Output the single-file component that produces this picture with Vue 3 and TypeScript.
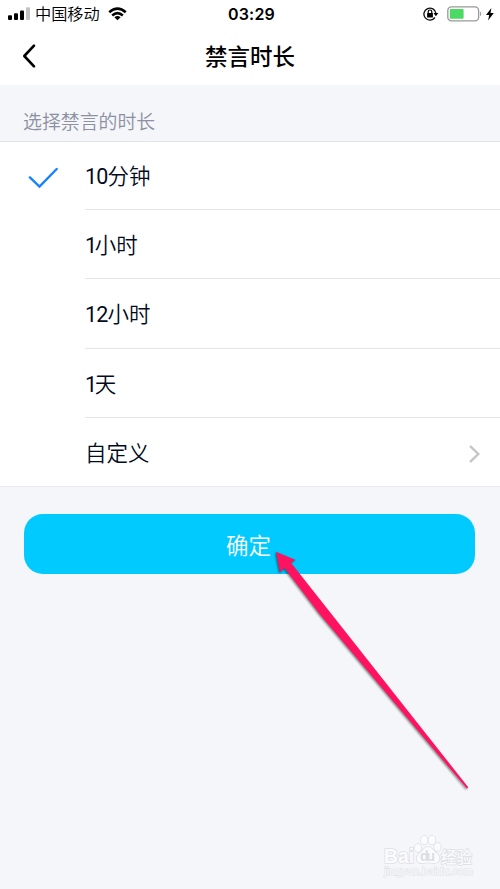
<script setup lang="ts">
import { ref } from 'vue'

interface DurationOption {
  amount?: string
  unit: string
  more?: boolean
}

const options: DurationOption[] = [
  { amount: '10', unit: '分钟' },
  { amount: '1', unit: '小时' },
  { amount: '12', unit: '小时' },
  { amount: '1', unit: '天' },
  { unit: '自定义', more: true },
]
const selected = ref(0)
</script>

<template>
  <div class="screen">
    <header class="top">
      <div class="status">
        <div class="status-left">
          <svg class="signal" width="22" height="14" viewBox="0 0 22 14">
            <rect x="0" y="8.2" width="4" height="4.8" rx="1" />
            <rect x="6" y="6.2" width="4" height="6.8" rx="1" />
            <rect x="12" y="3.4" width="4" height="9.6" rx="1" />
            <rect x="18" y="0.2" width="4" height="12.8" rx="1" fill="#c3c3c3" />
          </svg>
          <span class="carrier">中国移动</span>
          <svg class="wifi" width="19" height="14" viewBox="0 0 20 14">
            <g fill="none" stroke="#000" stroke-width="2.7">
              <path d="M1.3 5.2Q10 -2.5 18.7 5.2" />
              <path d="M4.4 8.6Q10 3.6 15.6 8.6" />
            </g>
            <path d="M6.7 10.5Q10 7.9 13.3 10.5L10 13.7Z" />
          </svg>
        </div>
        <span class="clock">03:29</span>
        <div class="status-right">
          <svg width="16" height="14" viewBox="0 0 16 14">
            <path d="M11.9 10.5A6 6 0 1 1 12.9 6.4" fill="none" stroke="#111" stroke-width="1.35" />
            <path d="M10.5 6.1H15.3L12.9 9.2Z" />
            <rect x="4.1" y="6.1" width="5.8" height="4.4" rx=".5" />
            <path d="M5.2 6.4V4.8a1.8 1.8 0 0 1 3.6 0V6.4" fill="none" stroke="#000" stroke-width="1.2" />
          </svg>
          <svg class="battery" width="36" height="16" viewBox="0 0 36 16">
            <rect x=".8" y=".8" width="30.8" height="14" rx="3.6" fill="#fff" stroke="#999" stroke-width="1.3" />
            <rect x="2.8" y="2.9" width="13.8" height="9.8" rx="1" fill="#4cd964" />
            <path d="M33.2 5.2Q35.2 7.8 33.2 10.4Z" fill="#888" />
          </svg>
          <svg class="bolt" width="8" height="13" viewBox="0 0 8 13">
            <path d="M5.4 0L0 7.1H3.2L2.1 12.6L7.8 5.1H4.5Z" />
          </svg>
        </div>
      </div>
      <div class="nav">
        <svg class="back" width="14" height="26" viewBox="0 0 14 26">
          <path d="M12 2.6L2.3 13L12 23.4" fill="none" stroke="#000" stroke-width="2.6" stroke-linecap="round" stroke-linejoin="round" />
        </svg>
        <h1>禁言时长</h1>
      </div>
    </header>

    <h2 class="section">选择禁言的时长</h2>

    <ul class="list">
      <li v-for="(option, i) in options" :key="i" @click="selected = i">
        <div class="mark">
          <svg v-if="selected === i" width="30" height="22" viewBox="0 0 30 22">
            <path d="M1.9 10.4L11.5 19.6L28.7 2" fill="none" stroke="#1683ff" stroke-width="2.4" stroke-linecap="round" />
          </svg>
        </div>
        <div class="row">
          <span class="label"><span v-if="option.amount" class="amount" :class="{ single: option.amount.length === 1 }">{{ option.amount }}</span>{{ option.unit }}</span>
          <svg v-if="option.more" class="chevron" width="12" height="18" viewBox="0 0 12 18">
            <path d="M1.7 1.7L9.3 9L1.7 16.3" fill="none" stroke="#c4c5c8" stroke-width="2.4" stroke-linecap="round" />
          </svg>
        </div>
      </li>
    </ul>

    <button class="confirm" type="button">确定</button>

    <svg class="pointer" width="210" height="254" viewBox="270 544 210 254">
      <path d="M276 551.8L295.8 560L290.8 562.6L320 599.6L406 708.5L468.2 787.2L467 788.8L401 710.5L320 614.5L284.4 568L280 572.8Z" />
    </svg>

    <svg class="watermark" width="104" height="54" viewBox="376 828 104 54">
      <g class="brand">
        <text x="384" y="863" font-size="20" textLength="30" lengthAdjust="spacingAndGlyphs">Bai</text>
        <ellipse cx="418" cy="848" rx="3.2" ry="4" />
        <ellipse cx="424.3" cy="840" rx="3.3" ry="4.3" />
        <ellipse cx="432" cy="840" rx="3.3" ry="4.3" />
        <ellipse cx="437.5" cy="847" rx="3.2" ry="4" />
        <path d="M428 847C432 847 433.5 851 437.5 854C442 859 438 864 433 863Q428 861.8 423 863C417 864 414.5 858 419 854C423 851 424 847 428 847Z" />
        <text class="du" x="420" y="861" font-size="14" textLength="15">du</text>
        <text class="cn" x="441" y="862.5" font-size="15.5" textLength="31">经验</text>
        <text class="site" x="384" y="875" font-size="10.5" textLength="89" lengthAdjust="spacingAndGlyphs">jingyan.baidu.com</text>
      </g>
    </svg>
  </div>
</template>

<style>
body {
  margin: 0;
  background: #f4f6fa;
}
</style>

<style scoped>
.screen {
  position: relative;
  width: 500px;
  height: 889px;
  overflow: hidden;
  background: #f4f6fa;
  color: #030b20;
  font-family: "Noto Sans CJK SC", sans-serif;
}
.top {
  height: 85px;
  background: #fff;
  color: #000;
}
.status {
  display: grid;
  grid-template-columns: 1fr auto 1fr;
  align-items: center;
  height: 28px;
  padding: 0 6px 0 8px;
}
.status-left,
.status-right {
  display: flex;
  align-items: center;
}
.status-right {
  justify-content: flex-end;
}
.carrier {
  margin: 0 8px 0 5px;
  padding-bottom: 2px;
  font: 350 16.2px/24px "Noto Sans CJK SC", sans-serif;
}
.clock {
  padding-left: 1px;
  font: 600 16px/28px Inter, sans-serif;
  letter-spacing: 0.2px;
}
.battery {
  margin: 0 3px 0 8px;
}
.nav {
  display: grid;
  grid-template-columns: 42px 1fr 42px;
  align-items: center;
  height: 56px;
}
.back {
  margin-left: 22px;
}
h1 {
  margin: 0;
  padding-bottom: 2px;
  text-align: center;
  font: 500 22.5px/54px "Noto Sans CJK SC", sans-serif;
}
.section {
  box-sizing: border-box;
  height: 56px;
  margin: 0;
  padding: 16px 23px 0;
  color: #8c90a1;
  font: 350 18.9px/40px "Noto Sans CJK SC", sans-serif;
}
.list {
  margin: 0;
  padding: 0;
  list-style: none;
  background: #fff;
  border-top: 1px solid #e2e4e8;
  border-bottom: 1px solid #e8eaed;
}
li {
  display: flex;
  height: 69px;
}
li:nth-child(3) {
  height: 70px;
}
li:first-child,
li:last-child {
  height: 68px;
}
.mark {
  display: flex;
  align-items: center;
  width: 57px;
  padding: 4px 0 0 28px;
}
.row {
  display: flex;
  flex: 1;
  align-items: center;
  justify-content: space-between;
  padding: 2px 19px 0 0;
  border-bottom: 1px solid #e5e6e9;
  font-size: 21.5px;
  font-weight: 350;
  line-height: 30px;
}
li:nth-child(odd) .row {
  padding-top: 0;
}
.amount {
  font-family: Roboto, sans-serif;
  font-weight: 400;
  font-size: 21.5px;
  letter-spacing: -0.8px;
}
.amount.single {
  letter-spacing: -2.4px;
}
li:last-child .row {
  border-bottom: 0;
}
.chevron {
  margin-top: 3px;
}
.confirm {
  display: block;
  width: 451px;
  height: 60px;
  margin: 27.4px 0 0 24px;
  padding: 0 2px 1px 0;
  border: 0;
  border-radius: 19px;
  background: #00caff;
  color: #fff;
  font: 350 22.5px/58px "Noto Sans CJK SC", sans-serif;
}
.pointer {
  position: absolute;
  left: 270px;
  top: 544px;
  fill: #ff1260;
  filter: drop-shadow(-1px 1px 1px rgba(0, 0, 0, 0.5));
}
.watermark {
  position: absolute;
  left: 376px;
  top: 828px;
}
.brand {
  fill: #fafbfd;
  stroke: #dfe0e4;
  stroke-width: 1.6px;
  paint-order: stroke;
  font-family: "Liberation Sans", "Noto Sans CJK SC", sans-serif;
  font-weight: 700;
}
.du {
  fill: #dcdde1;
  stroke: none;
}
.cn {
  font-weight: 500;
}
.site {
  stroke-width: 1px;
  font-weight: 400;
}
</style>
